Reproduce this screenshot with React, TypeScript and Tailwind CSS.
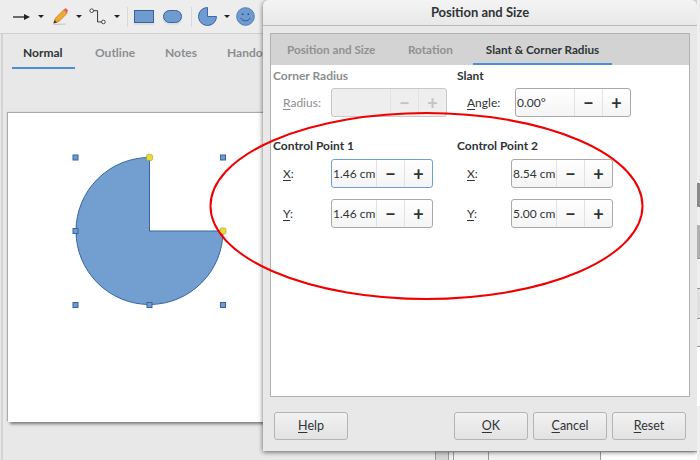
import type { ReactNode } from "react";

const FONT = { fontFamily: 'Lato, "Noto Sans", sans-serif' };

function Arrow() {
  return <span className="w-0 h-0 border-x-[3px] border-x-transparent border-t-[3px] border-t-[#222]" />;
}

function Toolbar() {
  return (
    <div className="h-[34px] shrink-0 border-b border-[#d0d0d0] bg-[#ededed] flex items-center pl-[13px]">
      <svg width="18" height="10" viewBox="0 0 18 10" className="mr-[7px]">
        <path d="M0 5h13" stroke="#333" strokeWidth="1.4" />
        <path d="M11 2l6 3-6 3z" fill="#222" />
      </svg>
      <Arrow />
      <svg width="17" height="17" viewBox="0 0 20 20" className="ml-[8px] mr-[7px]">
        <path d="M1 20c5-1 10-1 15-1" stroke="#bbb" strokeWidth="1" fill="none" />
        <path d="M4 12L14 2l4 4L8 16l-6 2z" fill="#f0a830" stroke="#b5701c" strokeWidth="0.8" />
        <path d="M14 2l2-2 3 3-2 3z" fill="#e0605a" />
        <path d="M2 18l1-4 3 3z" fill="#3a3a3a" />
      </svg>
      <Arrow />
      <svg width="18" height="18" viewBox="0 0 20 20" className="ml-[7px] mr-[7px]">
        <path d="M3 3h6.500v12.500h6" stroke="#333" strokeWidth="1.100" fill="none" />
        <circle cx="3" cy="3" r="2" fill="#fff" stroke="#333" />
        <circle cx="16" cy="15.500" r="2" fill="#fff" stroke="#333" />
      </svg>
      <Arrow />
      <span className="w-px h-[20px] bg-[#d8d8d8] ml-[7px] mr-[6px]" />
      <span className="w-[20px] h-[13px] bg-[#6f9bd0] border border-[#34659f] shadow-[0_2px_1px_#ddd]" />
      <span className="w-[19px] h-[13px] ml-[9px] rounded-full bg-[#6f9bd0] border border-[#34659f] shadow-[0_2px_1px_#ddd]" />
      <span className="w-px h-[20px] bg-[#d8d8d8] ml-[9px] mr-[6px]" />
      <svg width="19" height="19" viewBox="0 0 20 20" className="mr-[7px]">
        <path d="M10 0.500V10h9.500A9.500 9.500 0 1 1 10 0.500z" fill="#6f9bd0" stroke="#34659f" />
      </svg>
      <Arrow />
      <svg width="19" height="19" viewBox="0 0 20 20" className="ml-[6px]">
        <circle cx="10" cy="10" r="9.300" fill="#6f9bd0" stroke="#4a7cb5" />
        <circle cx="7" cy="7.500" r="1" fill="#2b5688" />
        <circle cx="13" cy="7.500" r="1" fill="#2b5688" />
        <path d="M5 11.500c2 4 8 4 10 0" stroke="#2b5688" fill="none" />
      </svg>
    </div>
  );
}

function Handle({ x, y, yellow }: { x: number; y: number; yellow?: boolean }) {
  return yellow ? (
    <rect x={x - 3} y={y - 3} width="6" height="6" rx="1.500" fill="#e8dc30" stroke="#9a9a40" strokeWidth="0.6" />
  ) : (
    <rect x={x - 2.500} y={y - 2.500} width="5" height="5" fill="#6f9bd0" stroke="#34659f" strokeWidth="1" />
  );
}

function Slide() {
  return (
    <div className="ml-[5px] mt-[44px] w-[262px] h-[309px] bg-white shadow-[-1px_-1px_1px_#aaa,2px_2px_3px_#777]">
      <svg width="262" height="309" viewBox="0 0 262 309">
        <path d="M141.500 44.500V118H215A73.500 73.500 0 1 1 141.500 44.500z" fill="#729fcf" stroke="#3465a4" strokeWidth="1" />
        <Handle x={67.500} y={44.500} />
        <Handle x={215} y={44.500} />
        <Handle x={67.500} y={118} />
        <Handle x={67.500} y={192} />
        <Handle x={141.500} y={192} />
        <Handle x={215} y={192} />
        <Handle x={141.500} y={44.500} yellow />
        <Handle x={215} y={118} yellow />
      </svg>
    </div>
  );
}

function Tab({ children, active, className }: { children: ReactNode; active?: boolean; className: string }) {
  return (
    <span className={`font-bold text-[12px] leading-[16px] ${active ? "text-[#2e3436]" : "text-[#8b8e8f]"} ${className}`}>
      {children}
    </span>
  );
}

function SpinButton({ sign, disabled }: { sign: string; disabled?: boolean }) {
  return (
    <span
      className={`w-[28px] h-full border-l border-[#e2e2e2] flex items-center justify-center text-[18px] font-bold leading-none ${
        disabled ? "text-[#c4c4c4]" : "text-[#2e3436]"
      }`}
    >
      {sign}
    </span>
  );
}

function Spin({
  value,
  width,
  entry,
  focused,
  disabled,
}: {
  value: string;
  width: string;
  entry: string;
  focused?: boolean;
  disabled?: boolean;
}) {
  return (
    <div
      className={`${width} h-[29px] flex rounded-[3px] border ${
        focused ? "border-[#6d9fd8]" : disabled ? "border-[#c8c8c8]" : "border-[#a8a8a8]"
      } ${disabled ? "bg-[#eeeeee]" : "bg-gradient-to-b from-white to-[#f4f4f4]"}`}
    >
      <span className={`${entry} pl-[1px] text-[12px] leading-[27px] text-[#2e3436] whitespace-nowrap`}>
        {value}
      </span>
      <SpinButton sign="−" disabled={disabled} />
      <SpinButton sign="+" disabled={disabled} />
    </div>
  );
}

function Label({ letter, rest, className, muted }: { letter: string; rest: string; className: string; muted?: boolean }) {
  return (
    <span className={`text-[12px] ${muted ? "text-[#8b8e8f]" : "text-[#2e3436]"} ${className}`}>
      <span className="underline underline-offset-2">{letter}</span>
      {rest}
    </span>
  );
}

function DialogButton({ letter, rest, className }: { letter: string; rest: string; className: string }) {
  return (
    <div
      className={`h-[28px] rounded-[3px] border border-[#b4b4b4] bg-gradient-to-b from-[#f2f2f2] to-[#e2e2e2] flex items-center justify-center text-[12.500px] text-[#2e3436] ${className}`}
    >
      <span>
        <span className="underline underline-offset-2">{letter}</span>
        {rest}
      </span>
    </div>
  );
}

function Dialog() {
  return (
    <div className="absolute left-[263px] top-0 w-[434px] h-[451px] flex flex-col rounded-t-[6px] bg-[#e8e8e8] shadow-[0_1px_5px_rgba(0,0,0,0.6)]">
      <div className="h-[26px] shrink-0 border-b border-[#b8b8b8] rounded-t-[6px] bg-gradient-to-b from-[#f4f4f4] to-[#e8e8e8] flex items-center justify-center font-bold text-[13px] text-[#2e3436]">
        Position and Size
      </div>
      <div className="mt-[7px] mx-[7px] h-[364px] border border-[#b0b0b0] bg-white flex flex-col">
        <div className="h-[31px] shrink-0 bg-[#d3d3d3] flex font-bold text-[11.700px] text-[#8f9192]">
          <span className="ml-[16px] w-[121px] mt-[7px]">Position and Size</span>
          <span className="w-[65px] mt-[7px]">Rotation</span>
          <span className="w-[139px] border-b-[2px] border-[#4a90d9] pt-[7px] text-center text-[#2e3436]">Slant &amp; Corner Radius</span>
        </div>
        <div className="flex pl-[2px]">
          <div className="w-[184px]">
            <div className="font-bold text-[12px] leading-[16px] mt-[3px] text-[#8b8e8f]">Corner Radius</div>
            <div className="flex items-center mt-[4px]">
              <Label letter="R" rest="adius:" muted className="ml-[10px] w-[48px]" />
              <Spin value="" width="w-[116px]" entry="w-[58px]" disabled />
            </div>
            <div className="font-bold text-[12px] leading-[16px] mt-[21px] text-[#2e3436]">Control Point 1</div>
            <div className="flex items-center mt-[5px]">
              <Label letter="X" rest=":" className="ml-[10px] w-[48px]" />
              <Spin value="1.46 cm" width="w-[102px]" entry="w-[44px]" focused />
            </div>
            <div className="flex items-center mt-[11px]">
              <Label letter="Y" rest=":" className="ml-[10px] w-[48px]" />
              <Spin value="1.46 cm" width="w-[102px]" entry="w-[44px]" />
            </div>
          </div>
          <div>
            <div className="font-bold text-[12px] leading-[16px] mt-[3px] text-[#2e3436]">Slant</div>
            <div className="flex items-center mt-[4px]">
              <Label letter="A" rest="ngle:" className="ml-[10px] w-[48px]" />
              <Spin value="0.00°" width="w-[116px]" entry="w-[58px]" />
            </div>
            <div className="font-bold text-[12px] leading-[16px] mt-[21px] text-[#2e3436]">Control Point 2</div>
            <div className="flex items-center mt-[5px]">
              <Label letter="X" rest=":" className="ml-[10px] w-[44px]" />
              <Spin value="8.54 cm" width="w-[102px]" entry="w-[44px]" />
            </div>
            <div className="flex items-center mt-[11px]">
              <Label letter="Y" rest=":" className="ml-[10px] w-[44px]" />
              <Spin value="5.00 cm" width="w-[102px]" entry="w-[44px]" />
            </div>
          </div>
        </div>
      </div>
      <div className="flex mt-[15px] pl-[11px]">
        <DialogButton letter="H" rest="elp" className="w-[74px]" />
        <DialogButton letter="O" rest="K" className="w-[74px] ml-[106px]" />
        <DialogButton letter="C" rest="ancel" className="w-[74px] ml-[5px]" />
        <DialogButton letter="R" rest="eset" className="w-[74px] ml-[5px]" />
      </div>
    </div>
  );
}

export default function App() {
  return (
    <div style={FONT} className="relative w-[700px] h-[460px] overflow-hidden bg-[#e8e8e8]">
      <Toolbar />
      <div className="flex h-[426px]">
        <div className="w-[434px] border-l-2 border-l-[#d4d4d4] ml-px">
          <div className="flex h-[35px] pt-[11px]">
            <div className="relative w-[72px] h-[24px] pl-[20px]">
              <Tab active className="block">Normal</Tab>
              <span className="absolute left-[9px] right-0 bottom-0 h-[2px] bg-[#4a90d9]" />
            </div>
            <Tab className="ml-[20px]">Outline</Tab>
            <Tab className="ml-[30px]">Notes</Tab>
            <Tab className="ml-[30px]">Handout</Tab>
          </div>
          <Slide />
        </div>
        <div className="flex-1 flex flex-col justify-end">
          <div className="h-[9px] flex border-t border-[#ccc]">
            <span className="w-[14px] bg-[#d4d4d4] border-x border-[#999]" />
            <span className="w-[4px] bg-[#eeeeee]" />
            <span className="w-[36px] bg-[#f0f0f0] border-x border-[#999]" />
            <span className="w-[112px] bg-[#f2f2f2] border-r border-[#999]" />
            <span className="flex-1 bg-white" />
          </div>
        </div>
      </div>
      <Dialog />
      <div className="absolute left-[697px] top-0 w-[3px] h-[460px] flex flex-col bg-[#eeeeee]">
        <span className="h-[183px]" />
        <span className="h-[24px] bg-[#8a8a8a]" />
        <span className="h-[18px]" />
        <span className="h-[33px] bg-[#b0b0b0]" />
        <span className="h-[30px] border-t border-[#999]" />
        <span className="h-[30px] border-t border-[#999] bg-[#e0e0e0]" />
        <span className="h-[28px] border-t border-[#999]" />
        <span className="h-[60px] border-t border-[#999] bg-white" />
      </div>
      <svg className="absolute inset-0 pointer-events-none" width="700" height="460" viewBox="0 0 700 460">
        <ellipse cx="426.500" cy="206" rx="216" ry="93" fill="none" stroke="#f00000" strokeWidth="2" />
      </svg>
    </div>
  );
}
